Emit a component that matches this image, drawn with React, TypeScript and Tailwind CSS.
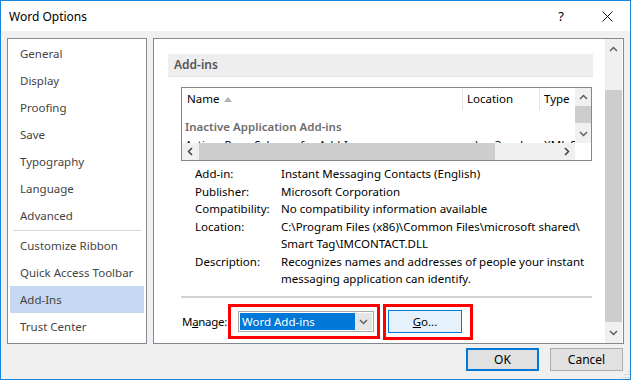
import React from 'react';

type Dir = 'up' | 'down' | 'left' | 'right';

function Chevron({ dir, className }: { dir: Dir; className?: string }) {
  const pts = {
    up: '1,6 4.5,2.5 8,6',
    down: '1,3 4.5,6.5 8,3',
    left: '6,1 2.5,4.5 6,8',
    right: '3,1 6.5,4.5 3,8',
  }[dir];
  return (
    <svg width="9" height="9" viewBox="0 0 9 9" className={className}>
      <polyline points={pts} fill="none" stroke="currentColor" strokeWidth="1.5" />
    </svg>
  );
}

const navTop = ['General', 'Display', 'Proofing', 'Save', 'Typography', 'Language', 'Advanced'];
const navBottom = ['Customize Ribbon', 'Quick Access Toolbar', 'Add-Ins', 'Trust Center'];

function NavItem({ label }: { label: string }) {
  const active = label === 'Add-Ins';
  return (
    <div
      className={`h-[27px] flex items-center pl-[10px] mx-[1px] ${active ? 'bg-[#c5d8f2]' : ''}`}
    >
      {label}
    </div>
  );
}

export default function App() {
  return (
    <div className="w-[631px] h-[380px] border border-[#1a84d8] bg-[#f0f0f0] flex flex-col font-['Noto_Sans',sans-serif] text-[11.5px] text-black overflow-hidden">
      {/* TITLE BAR */}
      <div className="h-[30px] bg-white flex items-center shrink-0 text-[12px] pt-[1px]">
        <span className="pl-[8px] flex-1">Word Options</span>
        <span className="w-[46px] text-center text-[13px]">?</span>
        <div className="w-[46px] flex justify-center">
          <svg width="11" height="11" viewBox="0 0 11 11">
            <path d="M0.5 0.5 L10.5 10.5 M10.5 0.5 L0.5 10.5" stroke="#111" strokeWidth="1" />
          </svg>
        </div>
      </div>

      {/* BODY */}
      <div className="flex gap-[6px] pl-[6px] pt-[7px] h-[313px] shrink-0">
        {/* NAV */}
        <div className="w-[140px] h-[306px] bg-white border border-[#828790] text-[#444444] pt-[1px] px-[1px]">
          {navTop.map((n) => (
            <NavItem key={n} label={n} />
          ))}
          <div className="h-[3px] flex items-center px-[4px]">
            <div className="h-[1px] w-full bg-[#d9d9d9]" />
          </div>
          {navBottom.map((n) => (
            <NavItem key={n} label={n} />
          ))}
        </div>

        {/* RIGHT PANEL */}
        <div className="w-[471px] h-[306px] bg-white border border-[#828790] flex">
          <div className="w-[451px] flex flex-col overflow-hidden">
            {/* SECTION HEADER */}
            <div className="ml-[14px] mt-[15px] w-[425px] h-[23px] bg-[#eeeeee] border-b border-[#e2e2e2] flex items-center pl-[6px] font-semibold text-[#555555] text-[12px]">
              Add-ins
            </div>

            {/* LIST BOX */}
            <div className="ml-[27px] mt-[10px] w-[411px] h-[74px] border border-[#828790] flex flex-col">
              <div className="flex h-[55px]">
                <div className="flex-1 overflow-hidden">
                  <div className="flex h-[22px] items-center">
                    <div className="w-[280px] pl-[5px] flex items-center gap-[5px]">
                      Name
                      <svg width="8" height="5" viewBox="0 0 8 5">
                        <path d="M0 5 L4 0 L8 5 Z" fill="#b0b0b0" />
                      </svg>
                    </div>
                    <div className="w-[77px] h-full border-l border-[#e5e5e5] pl-[4px] flex items-center">Location</div>
                    <div className="flex-1 h-full border-l border-[#e5e5e5] pl-[4px] flex items-center">Type</div>
                  </div>
                  <div className="pt-[9px] pl-[3px] leading-[16px] font-semibold text-[#6d6d6d] whitespace-nowrap">
                    Inactive Application Add-ins
                  </div>
                  <div className="flex leading-[16px] mt-[2px] whitespace-nowrap">
                    <div className="w-[280px] pl-[3px] overflow-hidden">ActionsPane Schema for Add-Ins</div>
                    <div className="w-[77px] pl-[5px] overflow-hidden">c:\...c3.xsd</div>
                    <div className="flex-1 pl-[5px] overflow-hidden">XML S</div>
                  </div>
                </div>
                {/* V SCROLL */}
                <div className="w-[16px] bg-[#f0f0f0] flex flex-col items-center text-[#606060]">
                  <div className="h-[18px] flex items-center justify-center">
                    <Chevron dir="up" />
                  </div>
                  <div className="w-full h-[17px] bg-[#cdcdcd]" />
                  <div className="flex-1 flex items-center justify-center">
                    <Chevron dir="down" />
                  </div>
                </div>
              </div>
              {/* H SCROLL */}
              <div className="flex h-[17px]">
                <div className="flex-1 bg-[#f0f0f0] flex items-center text-[#404040]">
                  <div className="w-[17px] h-full flex items-center justify-center">
                    <Chevron dir="left" />
                  </div>
                  <div className="w-[296px] h-full bg-[#cdcdcd]" />
                  <div className="flex-1" />
                  <div className="w-[17px] h-full flex items-center justify-center">
                    <Chevron dir="right" />
                  </div>
                </div>
                <div className="w-[16px] bg-white" />
              </div>
            </div>

            {/* DETAILS */}
            <div className="ml-[41px] mt-[4px] grid grid-cols-[86px_1fr] leading-[17.5px] whitespace-nowrap">
              <div>Add-in:</div>
              <div>Instant Messaging Contacts (English)</div>
              <div>Publisher:</div>
              <div>Microsoft Corporation</div>
              <div>Compatibility:</div>
              <div>No compatibility information available</div>
              <div>Location:</div>
              <div>
                C:\Program Files (x86)\Common Files\microsoft shared\
                <br />
                Smart Tag\IMCONTACT.DLL
              </div>
              <div>Description:</div>
              <div>
                Recognizes names and addresses of people your instant
                <br />
                messaging application can identify.
              </div>
            </div>

            {/* SEPARATOR */}
            <div className="ml-[27px] mt-[8px] w-[411px] h-[2px] bg-[#d3d3d3] shrink-0" />

            {/* MANAGE ROW */}
            <div className="ml-[28px] mt-[6px] flex items-center">
              <span className="w-[46px] whitespace-nowrap tracking-[-0.3px]">
                M<span className="underline">a</span>nage:
              </span>
              <div className="w-[152px] h-[35px] border-[3px] border-[#ff0000] flex items-center pl-[7px]">
                <div className="w-[136px] h-[21px] border border-[#a8a8a8] flex items-center p-[1px]">
                  <div className="flex-1 h-full bg-[#0078d7] text-white flex items-center pl-[2px]">Word Add-ins</div>
                  <div className="w-[17px] h-full bg-[#e5e5e5] flex items-center justify-center text-[#606060]">
                    <Chevron dir="down" />
                  </div>
                </div>
              </div>
              <div className="ml-[3px] w-[90px] h-[36px] border-[3px] border-[#ff0000] flex items-center pl-[2px]">
                <div className="w-[74px] h-[23px] bg-[#e5f1fb] border border-[#0078d7] flex items-center justify-center">
                  <span>
                    <span className="underline">G</span>o...
                  </span>
                </div>
              </div>
            </div>
          </div>

          {/* OUTER V SCROLL */}
          <div className="w-[17px] bg-[#f0f0f0] flex flex-col text-[#606060]">
            <div className="h-[20px] flex items-center justify-center">
              <Chevron dir="up" />
            </div>
            <div className="mt-[31px] h-[232px] bg-[#cdcdcd]" />
            <div className="flex-1 flex items-center justify-center">
              <Chevron dir="down" />
            </div>
          </div>
          <div className="w-[1px]" />
        </div>
      </div>

      {/* FOOTER BUTTONS */}
      <div className="flex justify-end items-start gap-[11px] pr-[7px] pt-[4px] relative flex-1 text-[12px]">
        <div className="w-[73px] h-[23px] border-2 border-[#0078d7] bg-[#e1e1e1] flex items-center justify-center">OK</div>
        <div className="w-[73px] h-[23px] border border-[#adadad] bg-[#e1e1e1] flex items-center justify-center">Cancel</div>
        <svg className="absolute right-0 bottom-0" width="8" height="8" viewBox="0 0 8 8">
          <rect x="6" y="0" width="1" height="1" fill="#b0b0b0" />
          <rect x="3" y="3" width="1" height="1" fill="#b0b0b0" />
          <rect x="6" y="3" width="1" height="1" fill="#b0b0b0" />
          <rect x="0" y="6" width="1" height="1" fill="#b0b0b0" />
          <rect x="3" y="6" width="1" height="1" fill="#b0b0b0" />
          <rect x="6" y="6" width="1" height="1" fill="#b0b0b0" />
        </svg>
      </div>
    </div>
  );
}
